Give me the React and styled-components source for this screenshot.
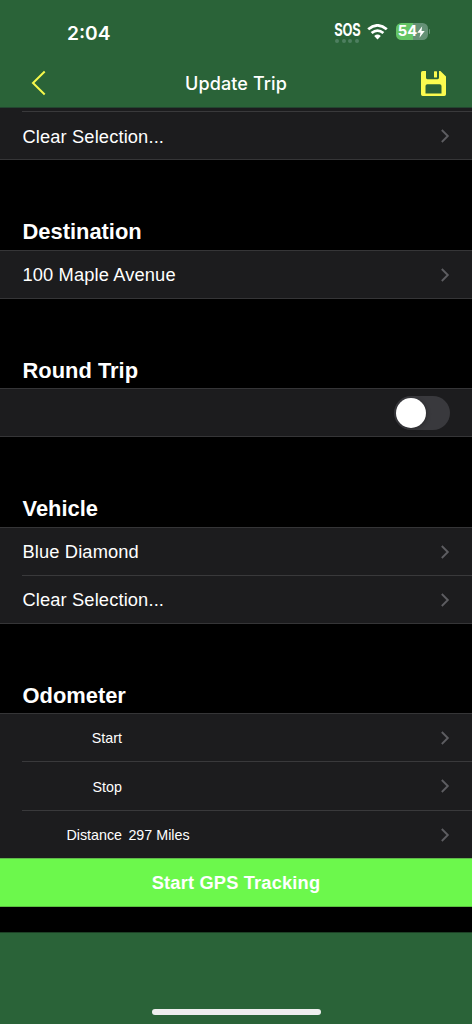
import React from 'react';
import styled, { createGlobalStyle } from 'styled-components';

const GlobalStyle = createGlobalStyle`
  *, *::before, *::after { box-sizing: border-box; }
  body {
    margin: 0;
    background: #000;
    color: #fff;
    font-family: "Liberation Sans", Arial, sans-serif;
  }
`;

const Screen = styled.div`
  display: flex;
  flex-direction: column;
  width: 100%;
  height: 1024px;
  overflow: hidden;
`;

const Header = styled.header`
  flex: none;
  height: 108px;
  background: #2a6338;
  border-bottom: 1px solid #234530;
  font-family: Inter, sans-serif;
`;

const StatusBar = styled.div`
  display: flex;
  justify-content: space-between;
  height: 60px;
  padding: 20px 42px 0 67px;
`;

const Time = styled.div`
  padding-top: 1px;
  font-size: 19.2px;
  line-height: 25px;
  font-weight: 600;
`;

const Indicators = styled.div`
  display: flex;
  align-items: flex-start;
  padding-top: 1px;
`;

const Signal = styled.div`
  display: flex;
  flex-direction: column;
  align-items: center;
  width: 27px;
`;

const Sos = styled.span`
  font-size: 17px;
  line-height: 18px;
  font-weight: 700;
  letter-spacing: -0.2px;
  transform: scaleX(0.76);
`;

const Dots = styled.div`
  display: flex;
  gap: 2.6px;
`;

const Dot = styled.i`
  width: 4px;
  height: 4px;
  border-radius: 50%;
  background: #4e7f60;
`;

const WifiIcon = styled.svg`
  width: 21px;
  height: 16px;
  margin: 3px 0 0 6px;
`;

const Battery = styled.div`
  display: flex;
  align-items: center;
  margin: 2px 0 0 8px;
`;

const BatteryBody = styled.div`
  display: flex;
  align-items: center;
  justify-content: center;
  width: 32px;
  height: 17px;
  border-radius: 5.5px;
  background: linear-gradient(90deg, #64c466 54%, #659176 54%);
  font-size: 14.8px;
  line-height: 17px;
  font-weight: 700;
`;

const Bolt = styled.svg`
  width: 8px;
  height: 12px;
`;

const BatteryTip = styled.span`
  width: 1.5px;
  height: 5px;
  margin-left: 1px;
  border-radius: 0 2px 2px 0;
  background: #659176;
`;

const NavBar = styled.nav`
  display: grid;
  grid-template-columns: 60px 1fr 60px;
  align-items: center;
  height: 46px;
`;

const Title = styled.h1`
  margin: 0;
  padding-top: 1px;
  font-size: 18px;
  line-height: 24px;
  font-weight: 500;
  letter-spacing: 0.1px;
  text-align: center;
`;

const NavButton = styled.button`
  display: flex;
  justify-content: ${({ $end }) => ($end ? 'flex-end' : 'flex-start')};
  padding: ${({ $end }) => ($end ? '0 26px 0 0' : '0 0 0 31px')};
  border: 0;
  background: none;
`;

const SectionTitle = styled.h2`
  display: flex;
  align-items: flex-end;
  flex: none;
  height: ${({ $height }) => $height}px;
  margin: 0;
  padding: 0 22.5px ${({ $gap }) => $gap || 6}px;
  font-size: 21.9px;
  line-height: 25px;
  font-weight: 700;
`;

const List = styled.div`
  flex: none;
  background: #1c1c1e;
  border-top: ${({ $clipped }) => ($clipped ? 0 : 1)}px solid #353537;
  border-bottom: ${({ $open }) => ($open ? 0 : 1)}px solid #353537;
  padding-top: ${({ $clipped }) => ($clipped ? 3 : 0)}px;
`;

const Row = styled.div`
  display: flex;
  align-items: center;
  justify-content: space-between;
  height: ${({ $height }) => $height || 47}px;
  margin-left: 22px;
  padding-right: 22px;
  border-top: ${({ $line }) => ($line ? 1 : 0)}px solid #39393b;
  font-size: 18.3px;
  line-height: 22px;
  letter-spacing: 0.13px;
`;

const RowText = styled.span`
  padding-top: ${({ $drop }) => $drop || 0}px;
  padding-left: 0.5px;
`;

const Reading = styled.div`
  display: grid;
  grid-template-columns: 100px auto;
  column-gap: 6.4px;
  padding-top: 1px;
  font-size: 14.3px;
  line-height: 20px;
  letter-spacing: 0;
`;

const Label = styled.span`
  text-align: right;
`;

const Switch = styled.div`
  width: 56px;
  height: 34px;
  padding: 2px;
  border-radius: 17px;
  background: #39393d;
`;

const Knob = styled.div`
  width: 30px;
  height: 30px;
  border-radius: 50%;
  background: #fff;
  box-shadow: 1px 1px 4px rgba(0, 0, 0, 0.25);
`;

const TrackButton = styled.button`
  flex: none;
  height: 49px;
  padding: 1px 0 0;
  border: 0;
  border-top: 1px solid #60b84b;
  border-bottom: 1px solid #5ac03f;
  background: #6cf84c;
  color: #fff;
  font: 700 18.3px/22px "Liberation Sans", Arial, sans-serif;
  letter-spacing: 0.16px;
`;

const Footer = styled.footer`
  display: flex;
  justify-content: center;
  align-items: flex-end;
  flex: 1;
  margin-top: 25px;
  padding-bottom: 9px;
  background: #2a6338;
  border-top: 1px solid #1c4025;
`;

const HomeIndicator = styled.div`
  width: 169px;
  height: 6px;
  border-radius: 3px;
  background: #eeeeee;
`;

const Chevron = () => (
  <svg width="10" height="14" viewBox="0 0 10 14" fill="none" stroke="#5d5d61" strokeWidth="1.9">
    <path d="M1.8 1l6 6-6 6" />
  </svg>
);

const BackIcon = () => (
  <svg width="15" height="26" viewBox="0 0 15 26" fill="none" stroke="#f6f94c" strokeWidth="2">
    <path d="M13.7 1.5L2 13l11.7 11.5" />
  </svg>
);

const SaveIcon = () => (
  <svg width="25" height="25" viewBox="0 0 25 25">
    <path
      fill="#fbfb4f"
      fillRule="evenodd"
      d="M1.7 0H5v6.8Q5 8.2 6.4 8.2H16.6Q18 8.2 18 6.8V0H19.4L25 5.6V23.3Q25 25 23.3 25H1.7Q0 25 0 23.3V1.7Q0 0 1.7 0ZM6.3 13.2Q4.5 13.2 4.5 15V22.6H20.5V15Q20.5 13.2 18.7 13.2Z"
    />
    <rect x="13" y="0.2" width="3" height="6.2" rx="0.5" fill="#fbfb4f" />
  </svg>
);

const SectionRow = ({ children, line, height, drop }) => (
  <Row $line={line} $height={height}>
    <RowText $drop={drop}>{children}</RowText>
    <Chevron />
  </Row>
);

const OdometerRow = ({ label, value, line, height }) => (
  <Row $line={line} $height={height}>
    <Reading>
      <Label>{label}</Label>
      <span>{value}</span>
    </Reading>
    <Chevron />
  </Row>
);

export default function App() {
  return (
    <>
      <GlobalStyle />
      <Screen>
        <Header>
          <StatusBar>
            <Time>2:04</Time>
            <Indicators>
              <Signal>
                <Sos>SOS</Sos>
                <Dots><Dot /><Dot /><Dot /><Dot /></Dots>
              </Signal>
              <WifiIcon viewBox="0 0 21 16" fill="none" stroke="#fff" strokeWidth="2.8">
                <path d="M1.2 5.3Q10.5-2.5 19.8 5.3M4.6 9Q10.5 4.2 16.4 9" />
                <path d="M7.2 11.9Q10.5 9.2 13.8 11.9L10.5 15.4Z" fill="#fff" stroke="none" />
              </WifiIcon>
              <Battery>
                <BatteryBody>
                  54
                  <Bolt viewBox="0 0 8 12" fill="#fff"><path d="M5.2.3L.3 6.8h3.2L2.5 11.7 7.7 5H4.5Z" /></Bolt>
                </BatteryBody>
                <BatteryTip />
              </Battery>
            </Indicators>
          </StatusBar>
          <NavBar>
            <NavButton aria-label="Back"><BackIcon /></NavButton>
            <Title>Update Trip</Title>
            <NavButton $end aria-label="Save"><SaveIcon /></NavButton>
          </NavBar>
        </Header>

        <List $clipped>
          <SectionRow line height={48} drop={2}>Clear Selection...</SectionRow>
        </List>

        <SectionTitle $height={90}>Destination</SectionTitle>
        <List>
          <SectionRow>100 Maple Avenue</SectionRow>
        </List>

        <SectionTitle $height={89} $gap={5}>Round Trip</SectionTitle>
        <List>
          <Row><span /><Switch role="switch" aria-checked="false"><Knob /></Switch></Row>
        </List>

        <SectionTitle $height={90}>Vehicle</SectionTitle>
        <List>
          <SectionRow>Blue Diamond</SectionRow>
          <SectionRow line height={48}>Clear Selection...</SectionRow>
        </List>

        <SectionTitle $height={89} $gap={5}>Odometer</SectionTitle>
        <List $open>
          <OdometerRow label="Start" height={47} />
          <OdometerRow label="Stop" line height={49} />
          <OdometerRow label="Distance" value="297 Miles" line height={48} />
        </List>

        <TrackButton>Start GPS Tracking</TrackButton>
        <Footer><HomeIndicator /></Footer>
      </Screen>
    </>
  );
}
